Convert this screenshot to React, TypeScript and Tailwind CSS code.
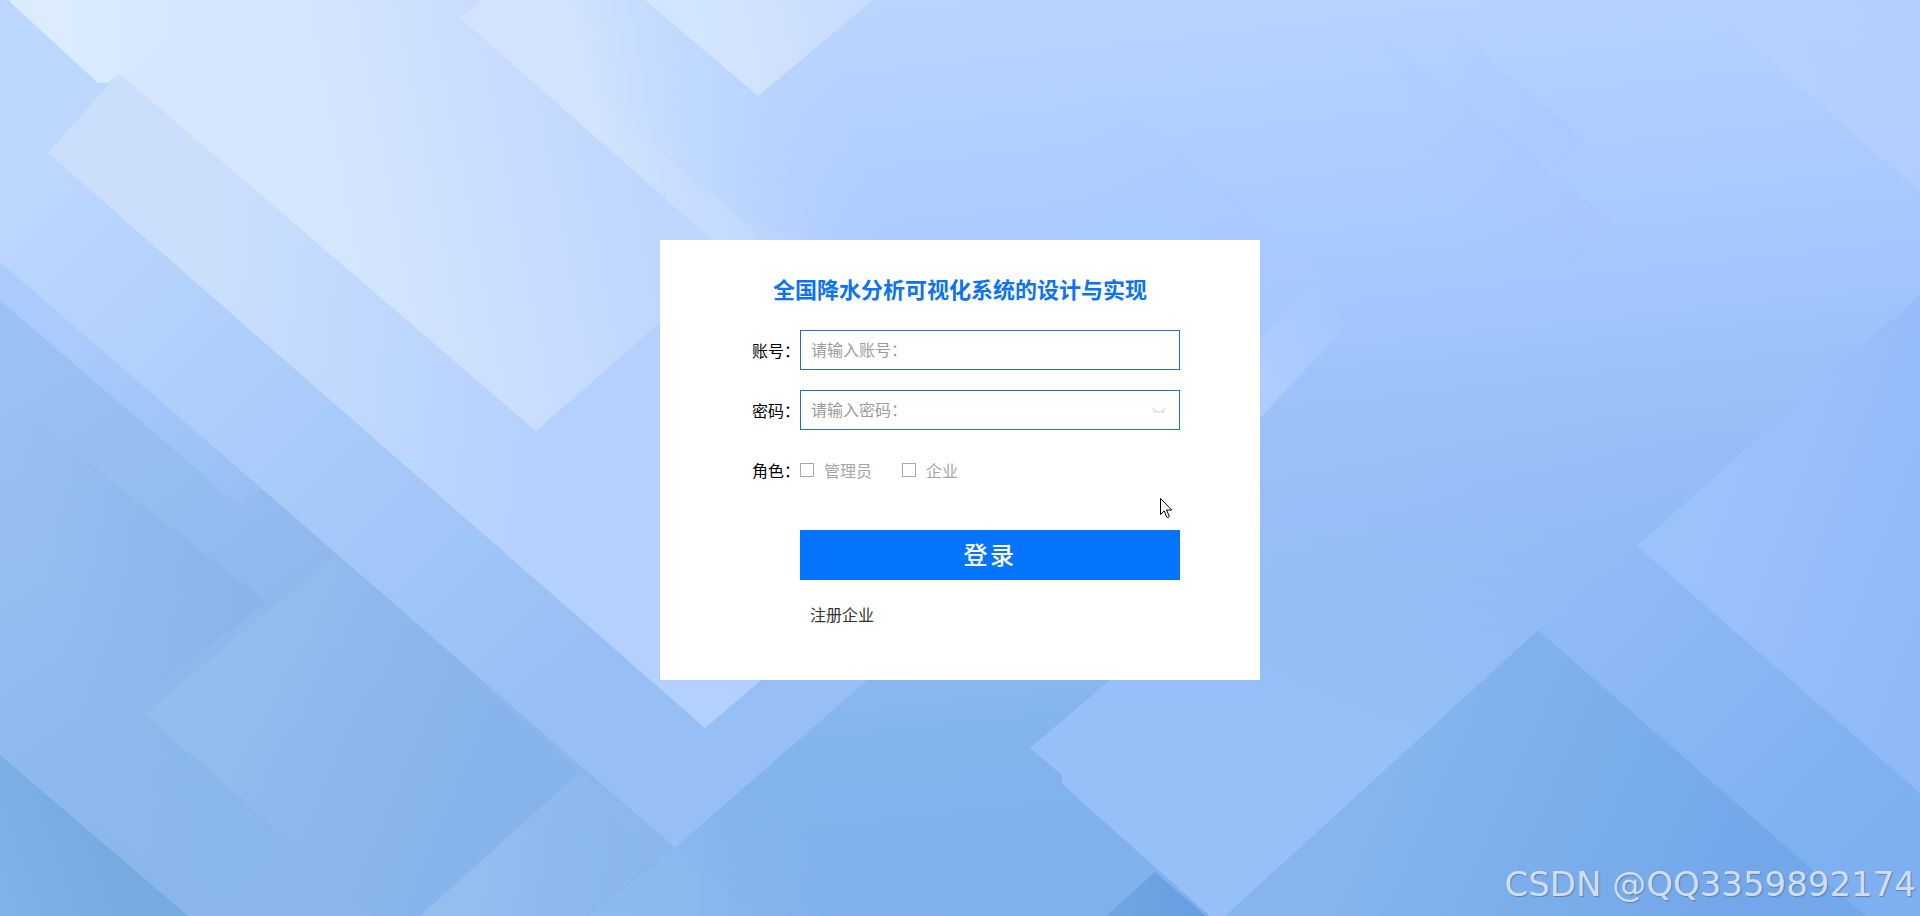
import { useState } from 'react'

const ROLES = ['管理员', '企业']

interface Facet {
  points: string
  from: [number, number, string, number]
  to: [number, number, string, number]
}

// Translucent and solid sheets of the backdrop, painted back to front.
// from / to: gradient x, y, colour, opacity
const FACETS: Facet[] = [
  { points: '0,300 240,506 261,488 700,870 700,916 0,916', from: [0, 320, '#9bc2f3', 1], to: [300, 760, '#8ab6ec', 1] },
  { points: '335,555 145,714 375,916 700,916 575,768', from: [240, 640, '#94c0ee', 0.7], to: [480, 740, '#85b1ec', 0.5] },
  { points: '0,395 0,760 140,700 267,602', from: [60, 640, '#84b2e8', 0], to: [240, 600, '#84b0e8', 0.5] },
  { points: '145,714 290,848 210,916 60,790', from: [60, 800, '#90baee', 0.6], to: [230, 740, '#86b6e8', 0.4] },
  { points: '0,755 188,916 0,916', from: [0, 900, '#7eb2e8', 1], to: [110, 860, '#77aae1', 1] },
  { points: '580,772 420,916 760,916 675,848', from: [480, 870, '#93bff0', 0.9], to: [700, 900, '#88b6ed', 0.3] },
  { points: '0,250 0,300 240,506 261,488', from: [60, 350, '#aacbfb', 1], to: [240, 500, '#98bff5', 1] },
  { points: '0,262 261,488 675,848 890,660 600,400 120,60 0,0', from: [40, 150, '#bcd8fe', 1], to: [560, 680, '#98bff5', 1] },
  { points: '770,770 675,848 590,916 950,916', from: [660, 900, '#8dbaf0', 0.9], to: [820, 840, '#82b1ea', 0.3] },
  { points: '120,72 48,153 705,728 780,664 800,235', from: [200, 290, '#cbdffd', 1], to: [560, 330, '#b4d0fe', 1] },
  { points: '200,0 118,72 536,431 760,235 480,0', from: [330, 260, '#d5e6ff', 1], to: [640, 200, '#bfd6fe', 1] },
  { points: '482,0 460,18 760,282 900,282 900,0', from: [600, 150, '#d1e3ff', 1], to: [850, 90, '#bad4fe', 0] },
  { points: '645,0 758,96 873,0', from: [700, 50, '#d3e6ff', 1], to: [830, 20, '#cbddfe', 1] },
  { points: '8,0 98,83 108,83 122,72 200,0', from: [60, 30, '#dcecfe', 1], to: [170, 30, '#d4e7ff', 1] },
  { points: '1000,0 1325,280 1250,345 1000,240 880,120', from: [1060, 190, '#a8cbfb', 0], to: [1260, 240, '#a9c9fd', 0.7] },
  { points: '1322,282 1345,328 1258,420 1258,338', from: [1260, 380, '#b5d1ff', 0.9], to: [1340, 300, '#aecdff', 0.2] },
  { points: '1385,40 1612,222 1500,330', from: [1430, 240, '#a8c8ff', 0], to: [1570, 160, '#a5c3fd', 0.5] },
  { points: '1460,35 1585,140 1545,175 1440,80', from: [1450, 140, '#a9c9ff', 0], to: [1540, 90, '#a6c4fe', 0.4] },
  { points: '1700,0 1920,192 1920,0', from: [1790, 90, '#b4d0fe', 0.9], to: [1920, 20, '#b6ccfc', 0.7] },
  { points: '1110,680 1030,748 1062,775 1062,784 1210,916 1400,916 1545,640 1920,640 1920,240 1260,240', from: [1300, 750, '#98c0f8', 1], to: [1420, 360, '#9cc2fb', 0] },
  { points: '1155,872 1106,916 1206,916', from: [1120, 900, '#70a4e4', 1], to: [1190, 900, '#689fe0', 1] },
  { points: '1538,630 1225,916 1866,916', from: [1400, 750, '#85b4ee', 1], to: [1740, 900, '#72a7ea', 1] },
  { points: '1637,546 1538,630 1866,916 1920,916 1920,793', from: [1600, 600, '#90b9f7', 1], to: [1860, 840, '#7eaff1', 1] },
  { points: '1920,295 1637,546 1920,793', from: [1690, 560, '#9cc2fc', 1], to: [1910, 640, '#90b9f9', 1] },
]

function Backdrop() {
  return (
    <svg
      className="absolute inset-0 h-full w-full"
      viewBox="0 0 1920 916"
      preserveAspectRatio="xMidYMid slice"
      aria-hidden="true"
    >
      <defs>
        <linearGradient id="base" gradientUnits="userSpaceOnUse" x1="900" y1="0" x2="1000" y2="916">
          <stop offset="0" stopColor="#b9d5fe" />
          <stop offset="0.3" stopColor="#a9caff" />
          <stop offset="0.6" stopColor="#94bcf6" />
          <stop offset="0.8" stopColor="#84b4ed" />
          <stop offset="1" stopColor="#80b0ee" />
        </linearGradient>
        {FACETS.map(({ from, to }, i) => (
          <linearGradient key={i} id={`facet-${i}`} gradientUnits="userSpaceOnUse" x1={from[0]} y1={from[1]} x2={to[0]} y2={to[1]}>
            <stop offset="0" stopColor={from[2]} stopOpacity={from[3]} />
            <stop offset="1" stopColor={to[2]} stopOpacity={to[3]} />
          </linearGradient>
        ))}
      </defs>
      <rect width="1920" height="916" fill="url(#base)" />
      {FACETS.map(({ points }, i) => (
        <polygon key={i} points={points} fill={`url(#facet-${i})`} />
      ))}
    </svg>
  )
}

function ClosedEye() {
  return (
    <svg className="h-4 w-4" viewBox="0 0 16 16" fill="none" stroke="#e2e4ea" strokeWidth="2">
      <path d="M2 6c1 3 3 4 6 4s5-1 6-4M4 9l-1 2M8 10v1M12 9l1 2" />
    </svg>
  )
}

function Cursor() {
  return (
    <svg className="absolute top-[258px] right-[87px] h-[21px] w-[13px]" viewBox="0 0 13 21" aria-hidden="true">
      <path
        d="M.5.5v16l3.700-3.600 2.600 6.300c.4.900 2.800 0 2.400-1L6.600 12h5.200z"
        fill="#fff"
        stroke="#000"
      />
    </svg>
  )
}

export default function App() {
  const [account, setAccount] = useState('')
  const [password, setPassword] = useState('')
  const [visible, setVisible] = useState(false)
  const [role, setRole] = useState('')

  return (
    <main className="relative flex min-h-screen items-center justify-center overflow-hidden bg-[#a9caff] pt-1 font-['Noto_Sans_CJK_SC',sans-serif] text-base text-black">
      <Backdrop />

      <form
        onSubmit={(e) => e.preventDefault()}
        className="relative w-full max-w-[600px] bg-white pt-[30px] pr-20 pb-13 pl-23"
      >
        <h1 className="-mr-20 -ml-23 text-center text-[22px] leading-9 font-bold text-[#0d73f2]">
          全国降水分析可视化系统的设计与实现
        </h1>

        <div className="mt-6 flex flex-col gap-5">
          <div className="flex h-10 items-center">
            <label htmlFor="account" className="w-12 shrink-0 whitespace-nowrap">
              账号：
            </label>
            <input
              id="account"
              type="text"
              value={account}
              onChange={(e) => setAccount(e.target.value)}
              placeholder="请输入账号："
              className="h-full min-w-0 flex-1 border border-[#2472b8] px-2.5 pb-0.5 outline-none placeholder:text-[#9b9b9b]"
            />
          </div>

          <div className="flex h-10 items-center">
            <label htmlFor="password" className="w-12 shrink-0 whitespace-nowrap">
              密码：
            </label>
            <div className="flex h-full min-w-0 flex-1 items-center border border-[#2472b8] pr-3">
              <input
                id="password"
                type={visible ? 'text' : 'password'}
                value={password}
                onChange={(e) => setPassword(e.target.value)}
                placeholder="请输入密码："
                className="h-full min-w-0 flex-1 px-2.5 pb-0.5 outline-none placeholder:text-[#9b9b9b]"
              />
              <button type="button" aria-label="显示密码" onClick={() => setVisible(!visible)}>
                <ClosedEye />
              </button>
            </div>
          </div>

          <fieldset className="flex h-10 items-center">
            <legend className="float-left w-12 shrink-0 leading-10 whitespace-nowrap">角色：</legend>
            <div className="flex gap-[30px] text-[#a6a6a6]">
              {ROLES.map((name) => (
                <label key={name} className="flex items-center gap-2.5">
                  <input
                    type="checkbox"
                    checked={role === name}
                    onChange={() => setRole(role === name ? '' : name)}
                    className="h-3.5 w-3.5 appearance-none border border-[#a9a9a9] checked:bg-[#0575ff]"
                  />
                  {name}
                </label>
              ))}
            </div>
          </fieldset>
        </div>

        <div className="mt-10 pl-12">
          <button
            type="submit"
            className="h-[50px] w-full bg-[#0575ff] pb-0.5 text-2xl font-medium tracking-widest text-white"
          >
            登录
          </button>
          <a href="#register" className="mt-5 ml-2.5 inline-block leading-7 text-[#333]">
            注册企业
          </a>
        </div>

        <Cursor />
      </form>

      <p className="absolute right-1 bottom-2 font-['DejaVu_Sans',sans-serif] text-[34px] leading-12 text-[#cfdff3] [text-shadow:1px_1px_1px_#5f7fa8]">
        CSDN @QQ3359892174
      </p>
    </main>
  )
}
